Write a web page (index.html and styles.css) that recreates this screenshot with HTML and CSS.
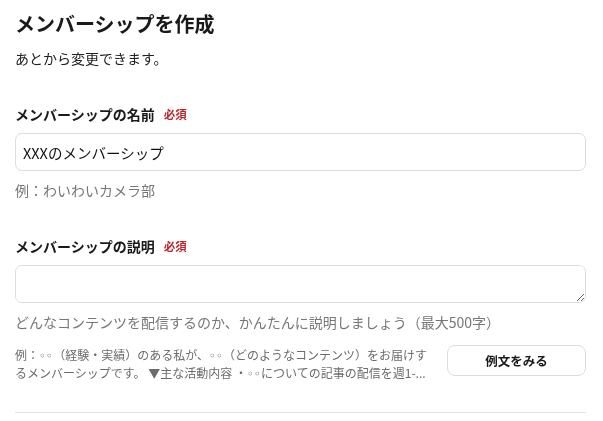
FILE: index.html
```html
<!DOCTYPE html>
<html lang="ja">
<head>
<meta charset="utf-8">
<link rel="stylesheet" href="styles.css">
</head>
<body>
<div class="page">
  <h1 class="title">メンバーシップを作成</h1>
  <p class="lead">あとから変更できます。</p>

  <div class="field first">
    <div class="label-row"><span class="label">メンバーシップの名前</span><span class="req">必須</span></div>
    <input class="input" type="text" value="XXXのメンバーシップ">
    <p class="hint">例：わいわいカメラ部</p>
  </div>

  <div class="field">
    <div class="label-row"><span class="label">メンバーシップの説明</span><span class="req">必須</span></div>
    <textarea class="textarea"></textarea>
    <p class="hint">どんなコンテンツを配信するのか、かんたんに説明しましょう（最大500字）</p>
    <div class="example-row">
      <p class="example">例：<span class="dot">◦◦</span>（経験・実績）のある私が、<span class="dot">◦◦</span>（どのようなコンテンツ）をお届けするメンバーシップです。 ▼主な活動内容 ・<span class="dot">◦◦</span>についての記事の配信を週1-...</p>
      <button class="btn" type="button">例文をみる</button>
    </div>
  </div>

  <hr class="divider">
</div>
</body>
</html>
```

FILE: styles.css
```css
* { box-sizing: border-box; }
html, body { margin: 0; padding: 0; background: #fff; }
body {
  font-family: "Noto Sans CJK JP", "Noto Sans", sans-serif;
  color: #222;
}
.page {
  padding: 10px 17px 0 15px;
  width: 603px;
}
.title {
  margin: 0;
  font-size: 20px;
  line-height: 28px;
  font-weight: 700;
  color: #1a1a1a;
}
.lead {
  margin: 10px 0 0;
  font-size: 14px;
  line-height: 20px;
  color: #222;
}
.field { margin-top: 36px; }
.label-row {
  display: flex;
  align-items: center;
  gap: 9px;
  height: 20px;
}
.label {
  font-size: 14px;
  font-weight: 700;
  line-height: 20px;
  color: #1a1a1a;
}
.req {
  font-size: 11.5px;
  font-weight: 700;
  color: #b8282e;
  line-height: 20px;
}
.input, .textarea {
  display: block;
  width: 100%;
  height: 38px;
  margin-top: 9px;
  border: 1px solid #dcdcdc;
  border-radius: 7px;
  padding: 0 7px;
  font-family: inherit;
  font-size: 14.5px;
  color: #111;
  background: #fff;
  outline: none;
}
.textarea { resize: vertical; padding: 8px 7px; }
.hint {
  margin: 9px 0 0;
  font-size: 14px;
  line-height: 20px;
  color: #777;
}
.example-row {
  display: flex;
  align-items: flex-start;
  gap: 15px;
  margin-top: 13px;
}
.example {
  flex: 1;
  margin: 1px 0 0;
  font-size: 12px;
  line-height: 18px;
  color: #6b6b6b;
}
.dot {
  font-family: "DejaVu Sans", sans-serif;
  font-size: 12px;
  line-height: 1;
}
.btn {
  flex: 0 0 139px;
  height: 31px;
  border: 1px solid #dcdcdc;
  border-radius: 8px;
  background: #fff;
  font-family: inherit;
  font-size: 12.5px;
  font-weight: 700;
  color: #1a1a1a;
}
.divider {
  margin: 30px 0 0;
  border: 0;
  border-top: 1px solid #e0e0e0;
  height: 0;
}
```
